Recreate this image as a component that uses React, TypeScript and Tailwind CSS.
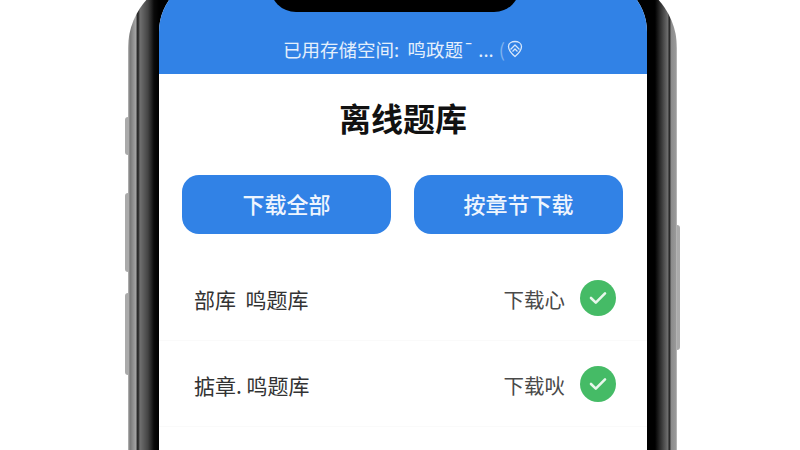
const cjk = "font-['Noto_Sans_CJK_SC','Noto_Sans',sans-serif]";

function Check() {
  return (
    <span className="flex h-9 w-9 items-center justify-center rounded-full bg-[#45bb66]">
      <svg width="20" height="16" viewBox="0 0 20 16" fill="none">
        <path d="M3 8 L7.8 12.6 L17 3.4" stroke="#e8f7ec" strokeWidth="2.6" strokeLinecap="round" strokeLinejoin="round" />
      </svg>
    </span>
  );
}

function Row({ left, right }: { left: string; right: string }) {
  return (
    <div className="flex h-[86px] items-center justify-between border-b border-[#fafafa] pl-[35px] pr-[31px]">
      <span className="whitespace-pre pt-[3px] text-[21px] leading-none text-[#333333]">{left}</span>
      <span className="flex items-center gap-[15px]">
        <span className="pt-[3px] text-[20.5px] leading-none text-[#4a4a4a]">{right}</span>
        <Check />
      </span>
    </div>
  );
}

export default function App() {
  return (
    <div className={`h-[450px] w-[800px] overflow-hidden bg-white ${cjk}`}>
      <div className="relative ml-[128px] mt-[-24px] h-[600px] w-[549px] rounded-[72px] bg-[linear-gradient(90deg,#bbb_0,#777_2px,#8f8f8f_5px,#a5a5a5_8px,#333_9px,#222_10px,#707070_12px,#444_20px,#0a0a0a_26px,#000_31px,#000_calc(100%-22px),#707070_calc(100%-9px),#222_calc(100%-8px),#333_calc(100%-7px),#8a8a8a_calc(100%-6px),#999_calc(100%-1px),#ccc_100%)]">
        <span className="absolute left-[-3px] top-[141px] h-[38px] w-[3px] rounded-l bg-[#aaa]" />
        <span className="absolute left-[-3px] top-[217px] h-[79px] w-[3px] rounded-l bg-[#aaa]" />
        <span className="absolute left-[-3px] top-[317px] h-[82px] w-[3px] rounded-l bg-[#aaa]" />
        <span className="absolute right-[-3px] top-[249px] h-[125px] w-[3px] rounded-r bg-[#aaa]" />
        <div className="absolute inset-y-0 left-[31px] right-[30px] overflow-hidden rounded-t-[56px] bg-white">
          <div className="flex h-[98px] items-end justify-center bg-[#3182e6] pb-[12px]">
            <span className="flex items-center text-[18.5px] leading-[26px] text-[#e4effc]">
              <span className="whitespace-pre">已用存储空间:  鸣政题¯ ...</span>
              <span className="ml-[5px] text-[#7fb2ef]">(</span>
              <svg className="ml-[2px]" width="16" height="18" viewBox="0 0 16 18" fill="none" stroke="#d7e7fb" strokeWidth="1.3" strokeLinejoin="round">
                <path d="M8 1.5 C11 1.5 14.5 3 14.5 6.5 C14.5 10 11 14 8 16.5 C5 14 1.5 10 1.5 6.5 C1.5 3 5 1.5 8 1.5 Z" />
                <path d="M3.5 9.5 L8 5 L12.5 9.5" />
                <path d="M5.5 11.5 L8 9 L10.5 11.5" />
              </svg>
            </span>
          </div>
          <h1 className="pt-[19px] text-center text-[32px] font-bold leading-[48px] text-[#111111]">离线题库</h1>
          <div className="mt-[34px] flex gap-[23px] pl-[23px]">
            <button className="h-[59px] w-[209px] rounded-[17px] bg-[#3182e6] pb-[3px] text-[22px] font-medium text-[#eef5fe]">下载全部</button>
            <button className="h-[59px] w-[209px] rounded-[17px] bg-[#3182e6] pb-[3px] text-[22px] font-medium text-[#eef5fe]">按章节下载</button>
          </div>
          <div className="mt-[21px]">
            <Row left="部库  鸣题库" right="下载心" />
            <Row left="掂章. 鸣题库" right="下载吙" />
          </div>
        </div>
        <div className="absolute left-[142px] top-0 h-[36px] w-[250px] rounded-b-[26px] bg-black" />
      </div>
    </div>
  );
}
